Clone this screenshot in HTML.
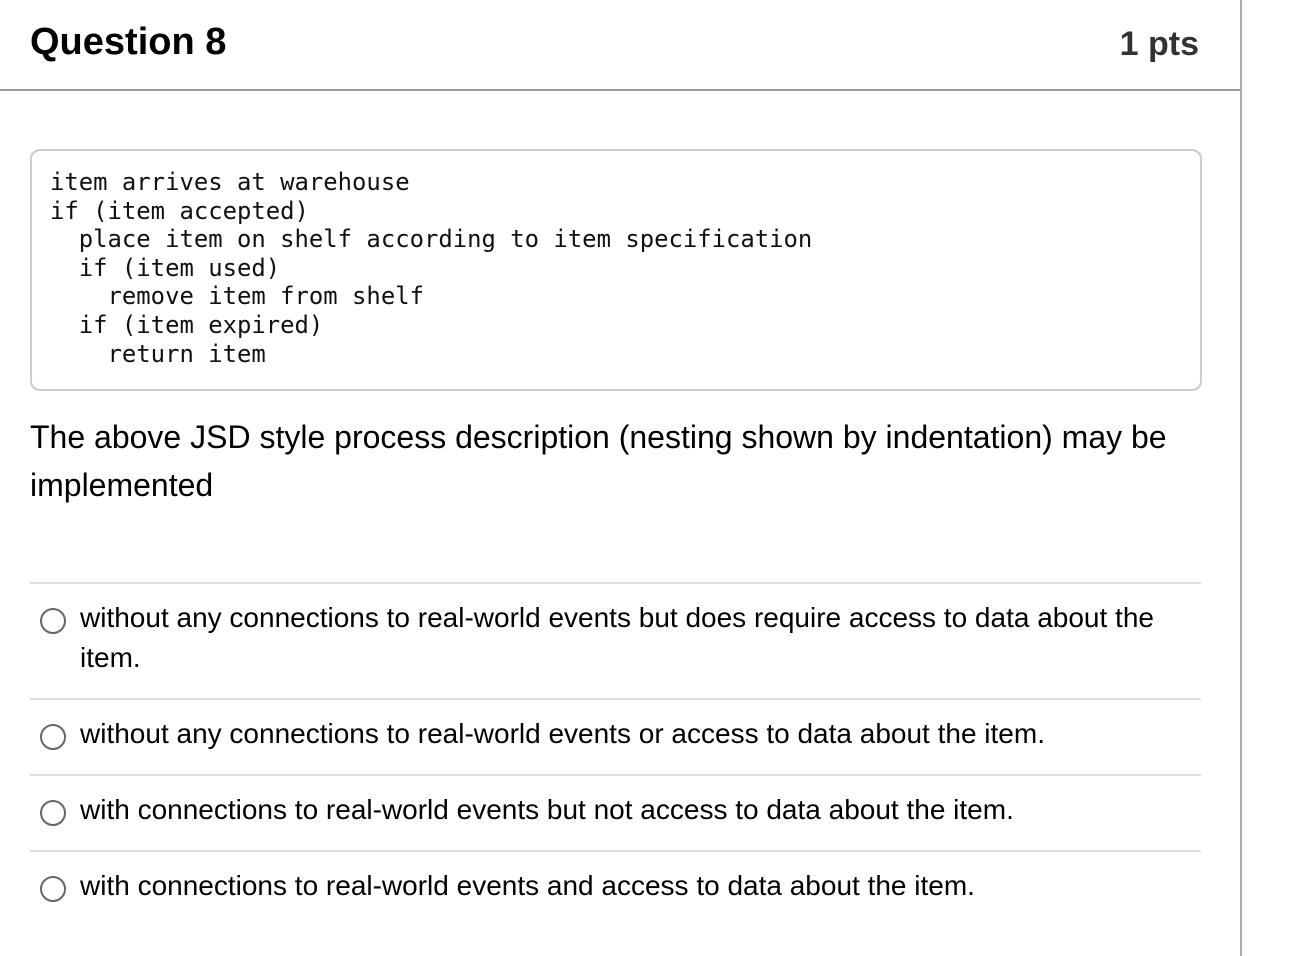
<!DOCTYPE html>
<html><head><style>
body{margin:0;width:1302px;height:956px;background:#fff;font-family:"Liberation Sans",Arial,sans-serif;color:#000;position:relative;overflow:hidden}
.vr{position:absolute;left:1240px;top:0;width:2px;height:956px;background:#aaa}
.hdr{position:absolute;left:0;top:0;width:1240px;height:89px;border-bottom:2px solid #999}
.q{position:absolute;left:30px;top:21px;font-size:38px;font-weight:bold}
.pts{position:absolute;right:41px;top:25px;font-size:34px;font-weight:bold;color:#333}
.code{position:absolute;left:30px;top:149px;width:1168px;height:238px;border:2px solid #ccc;border-radius:10px;box-sizing:content-box}
.code pre{margin:0;position:absolute;left:18px;top:17px;font-family:"DejaVu Sans Mono","Liberation Mono",monospace;font-size:23.9px;line-height:28.6px;color:#111}
.txt{position:absolute;left:30px;top:413px;width:1180px;font-size:32px;line-height:48px}
.sep{position:absolute;left:30px;width:1171px;height:2px;background:#ddd}
.opt{position:absolute;left:80px;width:1100px;font-size:28px;line-height:40px}
.rad{position:absolute;left:40px;width:22px;height:22px;border:2px solid #666;border-radius:50%}
</style></head><body>
<div class="vr"></div>
<div class="hdr"><div class="q">Question 8</div><div class="pts">1 pts</div></div>
<div class="code"><pre>item arrives at warehouse
if (item accepted)
  place item on shelf according to item specification
  if (item used)
    remove item from shelf
  if (item expired)
    return item</pre></div>
<div class="txt">The above JSD style process description (nesting shown by indentation) may be implemented</div>
<div class="sep" style="top:582px"></div>
<div class="rad" style="top:608px"></div>
<div class="opt" style="top:598px">without any connections to real-world events but does require access to data about the item.</div>
<div class="sep" style="top:698px"></div>
<div class="rad" style="top:724px"></div>
<div class="opt" style="top:714px">without any connections to real-world events or access to data about the item.</div>
<div class="sep" style="top:774px"></div>
<div class="rad" style="top:800px"></div>
<div class="opt" style="top:790px">with connections to real-world events but not access to data about the item.</div>
<div class="sep" style="top:850px"></div>
<div class="rad" style="top:876px"></div>
<div class="opt" style="top:866px">with connections to real-world events and access to data about the item.</div>
</body></html>
